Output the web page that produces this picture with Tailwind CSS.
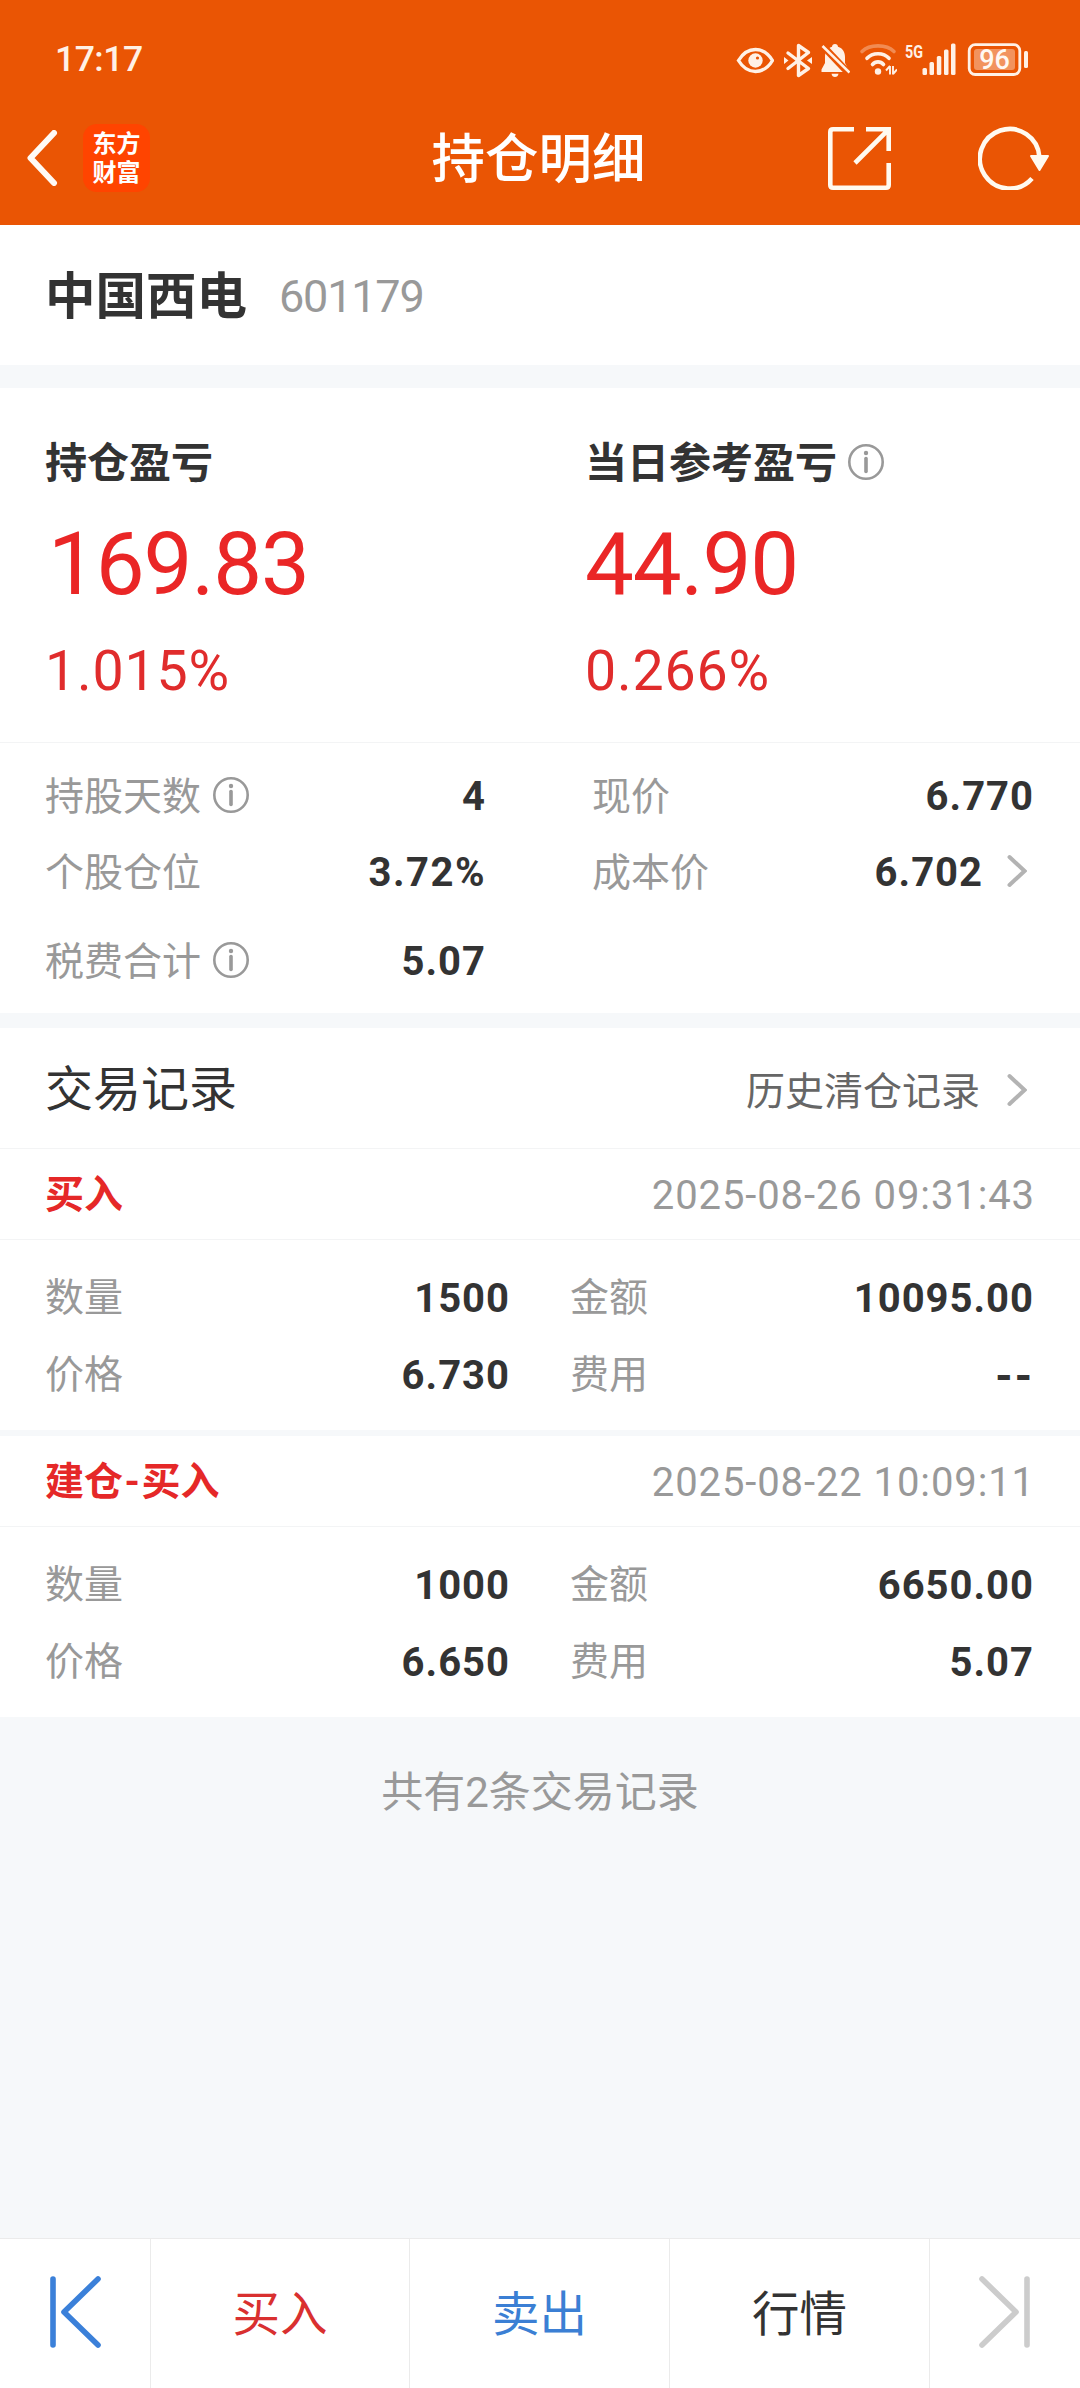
<!DOCTYPE html>
<html lang="zh-CN">
<head>
    <meta charset="UTF-8">
    <meta name="viewport" content="width=device-width, initial-scale=1.0">
    <title>持仓明细</title>
    <script src="https://cdn.jsdelivr.net/npm/@tailwindcss/browser@4"></script>
</head>
<body class="bg-[#f6f8fa] font-['Roboto','Noto_Sans_CJK_SC',sans-serif] text-[#333333]">
    <div class="flex flex-col w-[1080px] h-[2388px] mx-auto">
        <!-- 顶部 -->
        <header class="h-[225px] bg-[#ea5504] text-white shrink-0">
            <div class="h-[91px] pt-[29px] pl-[55px] pr-[52px] flex items-center justify-between">
                <span class="text-[35.5px] leading-none font-medium tracking-[-0.5px] text-[#fff1e6]">17:17</span>
                <div class="flex items-center text-[#fff1e6]">
                    <!-- 护眼 -->
                    <svg class="w-[38px] h-[36px] mr-[10px]" viewBox="736 42 38 36" fill="none">
                        <path d="M738.5 60.5C743 53 749 49.5 755.500 49.500S768 53 772.500 60.500C768 68 762 71.500 755.500 71.500S743 68 738.500 60.500Z" stroke="currentColor" stroke-width="3.400"/>
                        <circle cx="755.500" cy="60.500" r="7.200" fill="currentColor"/>
                        <circle cx="757.500" cy="58" r="1.600" fill="#ea5504"/>
                    </svg>
                    <!-- 蓝牙 -->
                    <svg class="w-[28px] h-[36px] mr-[8px]" viewBox="784 42 28 36" fill="none">
                        <path d="M788 53L808.500 68.500L798.500 75.500V45.500L808.500 52.500L788 68.500" stroke="currentColor" stroke-width="3.400" stroke-linejoin="round" stroke-linecap="round"/>
                        <path d="M784 57L788.500 60.500L784 64Z M812 57L807 60.500L812 64Z" fill="currentColor"/>
                    </svg>
                    <!-- 静音 -->
                    <svg class="w-[30px] h-[36px] mr-[9px]" viewBox="820 42 30 36">
                        <path d="M835 44C836.800 44 838 45.200 838 46.800C843 48.300 845 52.500 845 57V63L848.500 69.500V72H821.500V69.500L825 63V57C825 52.500 827 48.300 832 46.800C832 45.200 833.200 44 835 44Z M831.500 73.800H838.500C838 76 837 77 835 77S832 76 831.500 73.800Z" fill="currentColor"/>
                        <path d="M820.500 43.500L850 74.500" stroke="#ea5504" stroke-width="7"/>
                        <path d="M822.500 46L849.500 72.500" stroke="currentColor" stroke-width="2.600"/>
                    </svg>
                    <!-- 无线网络 -->
                    <svg class="w-[38px] h-[36px] mr-[7px]" viewBox="859 42 38 36" fill="none" stroke="currentColor" stroke-width="3.600" stroke-linecap="round">
                        <path d="M862 51.500C869.500 44 886.500 44 894 51.500" opacity="0.35"/>
                        <path d="M867 58.300C872.500 52.200 883.500 52.200 889 58.300"/>
                        <path d="M872.500 64.500C875.500 61 880.500 61 883.500 64.500"/>
                        <circle cx="878" cy="71.500" r="3.200" fill="currentColor" stroke="none"/>
                        <path d="M890 66V74.500M886 70.500L890 66M893 66V74.500M893 74L897 69.500" stroke-width="1.900" stroke-linecap="butt"/>
                    </svg>
                    <!-- 信号 -->
                    <svg class="w-[53px] h-[46px] mr-[10px]" viewBox="904 37 53 46" fill="currentColor">
                        <text x="905" y="57.500" font-size="19" font-weight="700" textLength="18" lengthAdjust="spacingAndGlyphs">5G</text>
                        <rect x="922.500" y="68" width="4.500" height="7" rx="1.500"/>
                        <rect x="929.500" y="62" width="4.500" height="13" rx="1.500"/>
                        <rect x="936.800" y="56" width="4.500" height="19" rx="1.500"/>
                        <rect x="944" y="49.500" width="4.500" height="25.500" rx="1.500"/>
                        <rect x="951" y="43.500" width="4.500" height="31.500" rx="1.500"/>
                    </svg>
                    <!-- 电量 -->
                    <svg class="w-[61px] h-[36px]" viewBox="967 42 61 36" fill="none">
                        <rect x="969.200" y="44.700" width="50.600" height="29.800" rx="6" stroke="currentColor" stroke-width="2.800"/>
                        <rect x="974" y="49" width="41" height="21" rx="3" fill="currentColor" opacity="0.4"/>
                        <rect x="1024" y="51" width="4" height="17" rx="1.500" fill="currentColor"/>
                        <text x="994.500" y="69" font-size="27" font-weight="500" text-anchor="middle" fill="#fff8f2">96</text>
                    </svg>
                </div>
            </div>
            <div class="h-[134px] pl-[26px] pr-[31px] grid grid-cols-3 items-center">
                <div class="flex items-center">
                    <svg class="w-[32px] h-[56px]" viewBox="0 0 32 56" fill="none" stroke="#fffaf5" stroke-width="6" stroke-linecap="round" stroke-linejoin="round">
                        <path d="M28 3L4.500 28L28 53"/>
                    </svg>
                    <div class="ml-[25px] w-[67px] h-[68px] rounded-[14px] bg-[#ff4400] flex flex-col items-center justify-center gap-[5px] text-[24px] leading-[24px] font-bold">
                        <span>东方</span>
                        <span>财富</span>
                    </div>
                </div>
                <h1 class="pt-[4px] pl-[2px] text-center text-[53.5px] leading-none font-medium whitespace-nowrap">持仓明细</h1>
                <div class="flex items-center justify-end">
                    <svg class="w-[63px] h-[63px] mr-[87px]" viewBox="0 0 63 63" fill="none" stroke="#fffaf0" stroke-width="4.600">
                        <path d="M26 2.300H5Q2.300 2.300 2.300 5V58Q2.300 60.700 5 60.700H58Q60.700 60.700 60.700 58V36"/>
                        <path d="M38 2.300H60.700V24M60.200 2.800L27 36"/>
                    </svg>
                    <svg class="w-[71px] h-[64px]" viewBox="0 0 71 64" fill="none">
                        <path d="M54 52.500A29.800 29.800 0 1 1 61.400 31" stroke="#fffaf0" stroke-width="4.600"/>
                        <path d="M53 30H70L61.500 44Z" fill="#fffaf0" stroke="#fffaf0" stroke-width="2" stroke-linejoin="round"/>
                    </svg>
                </div>
            </div>
        </header>

        <!-- 股票名称 -->
        <div class="h-[140px] pt-[3px] px-[45px] bg-white flex items-center shrink-0">
            <span class="pt-[2px] text-[50.5px] leading-none font-bold">中国西电</span>
            <span class="ml-[32px] text-[45px] leading-none tracking-[-1.2px] text-[#999999]">601179</span>
        </div>

        <!-- 盈亏 -->
        <section class="mt-[23px] h-[355px] pt-[46px] bg-white border-b border-[#f3f4f5] shrink-0">
            <div class="px-[45px] grid grid-cols-[540px_1fr]">
                <div>
                    <div class="h-[60px] flex items-center text-[42px] leading-none font-bold">持仓盈亏</div>
                    <div class="h-[140px] pl-[3px] flex items-center text-[87px] leading-none tracking-[-1.1px] text-[#ea2626]">169.83</div>
                    <div class="h-[72px] pt-[3px] flex items-center text-[55.5px] leading-none tracking-[0.8px] text-[#e02c2c]">1.015%</div>
                </div>
                <div>
                    <div class="h-[60px] flex items-center text-[42px] leading-none font-bold">
                        当日参考盈亏
                        <svg class="w-[36px] h-[36px] ml-[11px] -mt-[4px]" viewBox="0 0 36 36" fill="none" stroke="#999999">
                            <circle cx="18" cy="18" r="16.700" stroke-width="2.600"/>
                            <circle cx="18" cy="9" r="2.200" fill="#999999" stroke="none"/>
                            <path d="M18 14.500V27.500" stroke-width="3.600" stroke-linecap="round"/>
                        </svg>
                    </div>
                    <div class="h-[140px] flex items-center text-[87px] leading-none tracking-[-1.1px] text-[#ea2626]">44.90</div>
                    <div class="h-[72px] pt-[3px] flex items-center text-[55.5px] leading-none tracking-[0.8px] text-[#e02c2c]">0.266%</div>
                </div>
            </div>
        </section>

        <!-- 持仓信息 -->
        <section class="h-[270px] pt-[16px] px-[45px] bg-white grid grid-cols-[441px_442px] grid-rows-[76px_76px_102px] gap-x-[106px] text-[39px] leading-none text-[#999999] shrink-0">
            <div class="flex items-center justify-between">
                <span class="flex items-center">
                    持股天数
                    <svg class="w-[36px] h-[36px] ml-[12px] -mt-[4px]" viewBox="0 0 36 36" fill="none" stroke="#999999">
                        <circle cx="18" cy="18" r="16.700" stroke-width="2.600"/>
                        <circle cx="18" cy="9" r="2.200" fill="#999999" stroke="none"/>
                        <path d="M18 14.500V27.500" stroke-width="3.600" stroke-linecap="round"/>
                    </svg>
                </span>
                <span class="text-[40px] font-bold tracking-[1px] text-[#333333]">4</span>
            </div>
            <div class="flex items-center justify-between">
                <span>现价</span>
                <span class="text-[40px] font-bold tracking-[1px] text-[#333333]">6.770</span>
            </div>
            <div class="flex items-center justify-between">
                <span>个股仓位</span>
                <span class="text-[40px] font-bold tracking-[1.500px] text-[#333333]">3.72%</span>
            </div>
            <div class="flex items-center">
                <span>成本价</span>
                <span class="ml-auto text-[40px] font-bold tracking-[1px] text-[#333333]">6.702</span>
                <svg class="w-[20px] h-[34px] -mt-[4px] ml-[24px] mr-[7px]" viewBox="0 0 20 34" fill="none" stroke="#b3b3b3" stroke-width="4" stroke-linecap="round">
                    <path d="M2.500 3L17.500 17L2.500 31"/>
                </svg>
            </div>
            <div class="flex items-center justify-between">
                <span class="flex items-center">
                    税费合计
                    <svg class="w-[36px] h-[36px] ml-[12px] -mt-[4px]" viewBox="0 0 36 36" fill="none" stroke="#999999">
                        <circle cx="18" cy="18" r="16.700" stroke-width="2.600"/>
                        <circle cx="18" cy="9" r="2.200" fill="#999999" stroke="none"/>
                        <path d="M18 14.500V27.500" stroke-width="3.600" stroke-linecap="round"/>
                    </svg>
                </span>
                <span class="text-[40px] font-bold tracking-[1px] text-[#333333]">5.07</span>
            </div>
        </section>

        <!-- 交易记录 -->
        <div class="mt-[15px] h-[121px] px-[45px] bg-white border-b border-[#f3f4f5] flex items-center leading-none shrink-0">
            <h2 class="pt-[3px] text-[48px]">交易记录</h2>
            <span class="ml-auto pt-[8px] text-[39px] text-[#666666]">历史清仓记录</span>
            <svg class="w-[20px] h-[34px] mt-[3px] ml-[27px] mr-[8px]" viewBox="0 0 20 34" fill="none" stroke="#b3b3b3" stroke-width="4" stroke-linecap="round">
                <path d="M2.500 3L17.500 17L2.500 31"/>
            </svg>
        </div>
        <div class="h-[281px] bg-white leading-none shrink-0">
            <div class="h-[91px] pt-[3px] px-[45px] border-b border-[#f3f4f5] flex items-center justify-between">
                <span class="text-[39px] font-bold text-[#e52828]">买入</span>
                <span class="text-[40px] tracking-[0.9px] text-[#999999]">2025-08-26 09:31:43</span>
            </div>
            <div class="pt-[20px] px-[45px] grid grid-cols-[465px_464px] auto-rows-[77px] gap-x-[60px] text-[39px] text-[#999999]">
                <div class="flex items-center justify-between">
                    <span>数量</span>
                    <span class="text-[40px] font-bold tracking-[1px] text-[#333333]">1500</span>
                </div>
                <div class="flex items-center justify-between">
                    <span>金额</span>
                    <span class="text-[40px] font-bold tracking-[1px] text-[#333333]">10095.00</span>
                </div>
                <div class="flex items-center justify-between">
                    <span>价格</span>
                    <span class="text-[40px] font-bold tracking-[1px] text-[#333333]">6.730</span>
                </div>
                <div class="flex items-center justify-between">
                    <span>费用</span>
                    <span class="text-[44px] font-bold tracking-[2px] text-[#333333]">--</span>
                </div>
            </div>
        </div>
        <div class="mt-[6px] h-[281px] bg-white leading-none shrink-0">
            <div class="h-[91px] pt-[3px] px-[45px] border-b border-[#f3f4f5] flex items-center justify-between">
                <span class="text-[39px] font-bold text-[#e52828]">建仓<span class="mx-[1.500px]">-</span>买入</span>
                <span class="text-[40px] tracking-[0.9px] text-[#999999]">2025-08-22 10:09:11</span>
            </div>
            <div class="pt-[20px] px-[45px] grid grid-cols-[465px_464px] auto-rows-[77px] gap-x-[60px] text-[39px] text-[#999999]">
                <div class="flex items-center justify-between">
                    <span>数量</span>
                    <span class="text-[40px] font-bold tracking-[1px] text-[#333333]">1000</span>
                </div>
                <div class="flex items-center justify-between">
                    <span>金额</span>
                    <span class="text-[40px] font-bold tracking-[1px] text-[#333333]">6650.00</span>
                </div>
                <div class="flex items-center justify-between">
                    <span>价格</span>
                    <span class="text-[40px] font-bold tracking-[1px] text-[#333333]">6.650</span>
                </div>
                <div class="flex items-center justify-between">
                    <span>费用</span>
                    <span class="text-[40px] font-bold tracking-[1px] text-[#333333]">5.07</span>
                </div>
            </div>
        </div>
        <p class="h-[148px] pt-[3px] flex items-center justify-center text-[42px] leading-none text-[#999999] shrink-0">共有2条交易记录</p>

        <!-- 底部操作栏 -->
        <footer class="mt-auto h-[150px] bg-white border-t border-[#ebebeb] grid grid-cols-[150px_259px_260px_260px_151px] text-[47.5px] leading-none shrink-0">
            <div class="pb-[4px] flex items-center justify-center">
                <svg class="w-[52px] h-[74px]" viewBox="0 0 52 74" fill="none" stroke="#3b80d9" stroke-width="5.600" stroke-linecap="round" stroke-linejoin="round">
                    <path d="M4 4V70M49 4L15 37L49 70"/>
                </svg>
            </div>
            <div class="pt-[5px] border-l border-[#ebebeb] flex items-center justify-center text-[#d93030]">买入</div>
            <div class="pt-[5px] border-l border-[#ebebeb] flex items-center justify-center text-[#3b7fd4]">卖出</div>
            <div class="pt-[5px] border-l border-[#ebebeb] flex items-center justify-center">行情</div>
            <div class="pb-[4px] border-l border-[#ebebeb] flex items-center justify-center">
                <svg class="w-[52px] h-[74px]" viewBox="0 0 52 74" fill="none" stroke="#cccccc" stroke-width="5.600" stroke-linecap="round" stroke-linejoin="round">
                    <path d="M48 4V70M3 4L37 37L3 70"/>
                </svg>
            </div>
        </footer>
    </div>
</body>
</html>
